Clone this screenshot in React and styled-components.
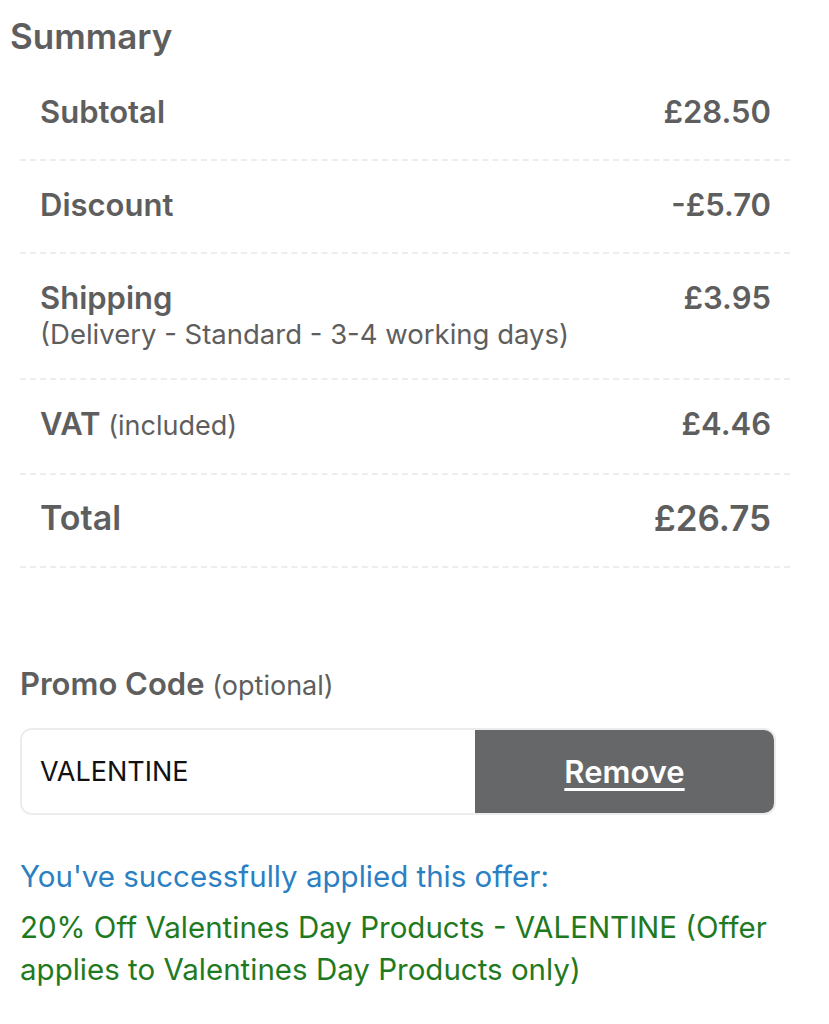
import React from 'react';
import styled, { createGlobalStyle } from 'styled-components';

const GlobalStyle = createGlobalStyle`
    body {
        margin: 0;
        background: #ffffff;
        font-family: Inter, "Noto Sans", sans-serif;
        color: #5e5e5e;
    }
`;

const rows = [
    { label: 'Subtotal', value: '£28.50' },
    { label: 'Discount', value: '-£5.70' },
    { label: 'Shipping', note: '(Delivery - Standard - 3-4 working days)', value: '£3.95' },
    { label: 'VAT', aside: '(included)', value: '£4.46' },
    { label: 'Total', value: '£26.75', big: true },
];

const App = () => {
    return (
        <>
            <GlobalStyle />
            <Page>
                <Heading>Summary</Heading>
                <Table>
                    {rows.map((row) => (
                        <Row key={row.label} $big={row.big}>
                            <LabelCol>
                                <Label $big={row.big}>
                                    {row.label}
                                    {row.aside && <Aside> {row.aside}</Aside>}
                                </Label>
                                {row.note && <Note>{row.note}</Note>}
                            </LabelCol>
                            <Value $big={row.big}>{row.value}</Value>
                        </Row>
                    ))}
                </Table>

                <Promo>
                    <PromoLabel>
                        Promo Code <Aside>(optional)</Aside>
                    </PromoLabel>
                    <PromoBox>
                        <CodeInput defaultValue="VALENTINE" />
                        <RemoveButton>Remove</RemoveButton>
                    </PromoBox>
                    <Success>You've successfully applied this offer:</Success>
                    <Offer>
                        20% Off Valentines Day Products - VALENTINE (Offer applies to Valentines Day Products only)
                    </Offer>
                </Promo>
            </Page>
        </>
    );
};

const Page = styled.div`
    width: 829px;
    padding: 14px 0 0 0;
`;

const Heading = styled.h2`
    margin: 0 0 10px 10px;
    font-size: 35px;
    font-weight: 600;
    line-height: 44px;
    color: #5e5e5e;
`;

const Table = styled.div`
    margin: 0 39px 0 20px;
    display: flex;
    flex-direction: column;
`;

const Row = styled.div`
    display: flex;
    justify-content: space-between;
    align-items: flex-start;
    padding: ${(p) => (p.$big ? '23px 19px 28px 20px' : '24px 19px 27px 20px')};
    border-bottom: 2px dashed #ededed;
`;

const LabelCol = styled.div`
    display: flex;
    flex-direction: column;
`;

const Label = styled.div`
    font-size: ${(p) => (p.$big ? '34px' : '31px')};
    font-weight: 600;
    line-height: 40px;
    color: #5e5e5e;
`;

const Aside = styled.span`
    font-size: 27px;
    font-weight: 400;
`;

const Note = styled.div`
    font-size: 27.5px;
    line-height: 33px;
    color: #5e5e5e;
`;

const Value = styled.div`
    font-size: ${(p) => (p.$big ? '35px' : '31px')};
    font-weight: 600;
    line-height: 40px;
    color: #5e5e5e;
`;

const Promo = styled.div`
    margin: 96px 53px 0 20px;
`;

const PromoLabel = styled.div`
    font-size: 31px;
    font-weight: 600;
    line-height: 40px;
    color: #5e5e5e;
`;

const PromoBox = styled.div`
    margin-top: 22px;
    display: flex;
    height: 87px;
    border: 2px solid #ececec;
    border-radius: 12px;
    overflow: hidden;
    box-sizing: border-box;
`;

const CodeInput = styled.input`
    flex: 0 0 453px;
    box-sizing: border-box;
    min-width: 0;
    border: none;
    outline: none;
    padding: 0 0 0 18px;
    font-family: Inter, "Noto Sans", sans-serif;
    font-size: 27px;
    color: #111111;
    background: #ffffff;
`;

const RemoveButton = styled.button`
    flex: 1;
    border: none;
    background: #666769;
    color: #ffffff;
    font-family: Inter, "Noto Sans", sans-serif;
    font-size: 31px;
    font-weight: 600;
    text-decoration: underline;
    text-underline-offset: 5px;
    cursor: pointer;
`;

const Success = styled.div`
    margin-top: 41px;
    font-size: 29.5px;
    line-height: 40px;
    color: #2a80c2;
`;

const Offer = styled.div`
    margin-top: 10px;
    font-size: 29.5px;
    line-height: 42px;
    color: #1f7a1f;
`;

export default App;
